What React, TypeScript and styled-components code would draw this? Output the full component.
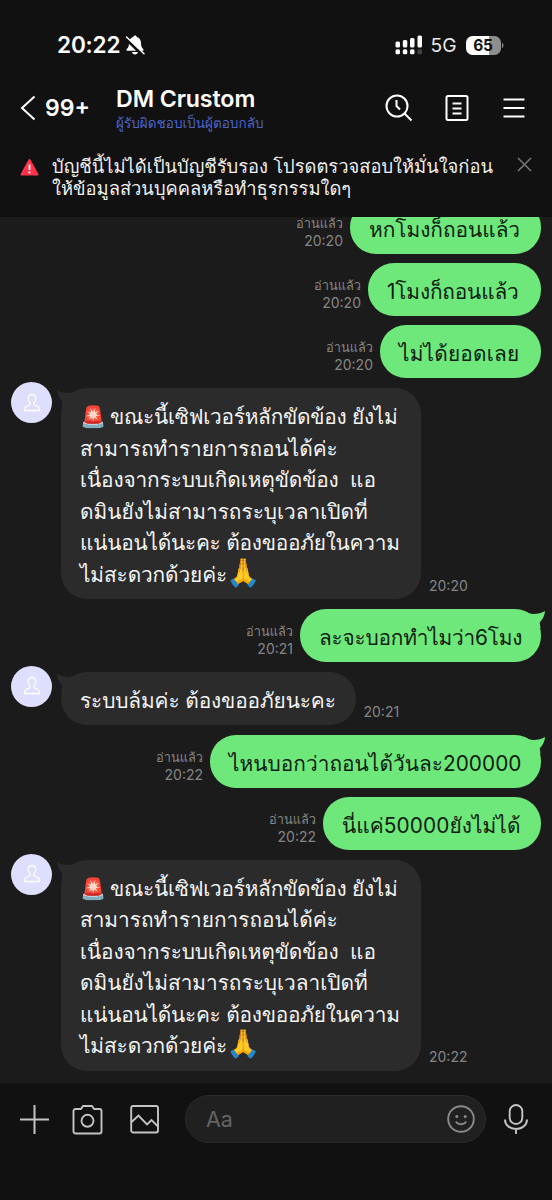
import React from "react";
import styled, { createGlobalStyle } from "styled-components";

const Global = createGlobalStyle`
  * { box-sizing: border-box; }
  html, body { margin: 0; background: #111111; }
  body { font-family: Inter, Loma, "Noto Sans Thai Looped", "Liberation Sans", sans-serif; color: #fff; overflow: hidden; }
`;

const Screen = styled.div`
  width: 552px;
  height: 1200px;
  display: flex;
  flex-direction: column;
  background: #1b1b1b;
  overflow: hidden;
`;

const Top = styled.header`
  height: 217px;
  flex: none;
  background: #111111;
  display: flex;
  flex-direction: column;
`;

const StatusBar = styled.div`
  height: 76px;
  padding: 14px 48.5px 0 57px;
  display: flex;
  align-items: center;
`;

const Clock = styled.span`
  font-size: 22.6px;
  font-weight: 600;
  line-height: 28px;
  letter-spacing: -0.2px;
`;

const BellOff = styled.svg`
  margin-left: 5px;
`;

const Signal = styled.svg`
  margin-left: auto;
`;

const Network = styled.span`
  font-size: 19.2px;
  line-height: 24px;
  color: #e8e8e8;
  margin: 0 9px 0 7.5px;
`;

const Battery = styled.div`
  width: 35px;
  height: 19px;
  border-radius: 6.5px;
  background: linear-gradient(90deg, #fff 0 65%, #8e8e8e 65%);
  color: #111;
  font-size: 15.5px;
  font-weight: 700;
  line-height: 19.5px;
  text-align: center;
  letter-spacing: -0.3px;
`;

const NavBar = styled.div`
  height: 64px;
  display: flex;
  align-items: center;
  padding: 0 27.5px 0 20px;
`;

const Unread = styled.span`
  width: 80px;
  padding-left: 9px;
  font-size: 23px;
  font-weight: 600;
  line-height: 28px;
`;

const TitleBlock = styled.div`
  flex: 1;
  height: 52px;
  padding-top: 3px;
`;

const Title = styled.div`
  font-size: 23.2px;
  font-weight: 600;
  line-height: 28px;
  letter-spacing: -0.1px;
`;

const Subtitle = styled.div`
  font-size: 13.55px;
  line-height: 20px;
  color: #4e64c8;
  white-space: nowrap;
`;

const NavIcons = styled.div`
  display: flex;
  align-items: center;
`;

const NoteIcon = styled.svg`
  margin: 0 34px 0 31.5px;
`;

const Notice = styled.div`
  display: flex;
  padding: 14.5px 20px 0 20px;
`;

const WarningIcon = styled.svg`
  margin-top: 3.5px;
`;

const CloseIcon = styled.svg`
  margin-top: 2.5px;
`;

const NoticeText = styled.div`
  flex: 1;
  min-width: 0;
  padding-left: 13px;
  font-size: 18.33px;
  line-height: 22.7px;
  color: #f2f2f2;
  white-space: nowrap;
`;

const Chat = styled.main`
  flex: 1;
  min-height: 0;
  overflow: hidden;
  display: flex;
  flex-direction: column;
  justify-content: flex-end;
  padding: 0 11px 12.5px;
`;

const Row = styled.div<{ $out?: boolean; $gap: number }>`
  display: flex;
  flex: none;
  justify-content: ${(p) => (p.$out ? "flex-end" : "flex-start")};
  align-items: flex-end;
  margin-top: ${(p) => p.$gap}px;
`;

const Bubble = styled.div<{ $out?: boolean; $w: number }>`
  position: relative;
  width: ${(p) => p.$w}px;
  padding: 13px 0 9px 19px;
  border-radius: 26px;
  background: ${(p) => (p.$out ? "#6fe87b" : "#2b2b2b")};
  color: ${(p) => (p.$out ? "#0c1c0e" : "#f4f4f4")};
`;

const Line = styled.div<{ $ls?: number }>`
  height: 31.5px;
  font-size: 20.8px;
  line-height: 31.5px;
  white-space: pre;
  letter-spacing: ${(p) => p.$ls ?? 0}px;
`;

const Emoji = styled.span<{ $size: number; $shift?: number }>`
  display: inline-block;
  width: 30px;
  margin-left: ${(p) => p.$shift ?? 0}px;
  font-size: ${(p) => p.$size}px;
  line-height: 24px;
  letter-spacing: 0;
`;

const Meta = styled.div<{ $out?: boolean }>`
  font-size: 14px;
  line-height: 16.5px;
  color: #858585;
  white-space: nowrap;
  text-align: ${(p) => (p.$out ? "right" : "left")};
  padding: ${(p) => (p.$out ? "0 7px 5px 0" : "0 0 5px 8px")};
`;

const ReadMark = styled.div`
  font-size: 12.8px;
`;

const Avatar = styled.div`
  align-self: flex-start;
  width: 41px;
  height: 41px;
  margin: -6px 9px 0 0;
  border-radius: 50%;
  background: #dedfff;
  display: flex;
  align-items: center;
  justify-content: center;
`;

const Tail = styled.svg<{ $out?: boolean }>`
  position: absolute;
  top: 0;
  ${(p) => (p.$out ? "right: -4px;" : "left: -4px; transform: scaleX(-1);")}
`;

const Composer = styled.footer`
  height: 117px;
  flex: none;
  background: #111111;
  border-top: 1px solid #161616;
  display: flex;
  align-items: flex-start;
  padding: 11px 20px 0 19px;
`;

const Tools = styled.div`
  display: flex;
  align-items: center;
  height: 48px;
`;

const CameraIcon = styled.svg`
  margin: 0 27px 0 22px;
`;

const Field = styled.div`
  width: 301px;
  height: 48px;
  margin: 0 18px 0 26px;
  border-radius: 24px;
  border: 1px solid #2a2a2a;
  background: #202020;
  display: flex;
  align-items: center;
  justify-content: space-between;
  padding: 0 10px 0 20px;
  font-size: 21.5px;
  color: #646464;
`;

type TextLine = { text: string; ls?: number; siren?: boolean; pray?: boolean };
type Msg = { out?: boolean; w: number; gap: number; time: string; lines: TextLine[]; tail?: boolean };

const outage: TextLine[] = [
  { text: "ขณะนี้เซิฟเวอร์หลักขัดข้อง ยังไม่", ls: -0.24, siren: true },
  { text: "สามารถทำรายการถอนได้ค่ะ" },
  { text: "เนื่องจากระบบเกิดเหตุขัดข้อง  แอ", ls: -0.12 },
  { text: "ดมินยังไม่สามารถระบุเวลาเปิดที่" },
  { text: "แน่นอนได้นะคะ ต้องขออภัยในความ", ls: -0.22 },
  { text: "ไม่สะดวกด้วยค่ะ", ls: -0.1, pray: true },
];

const messages: Msg[] = [
  { out: true, w: 191, gap: 0, time: "20:20", lines: [{ text: "หกโมงก็ถอนแล้ว" }] },
  { out: true, w: 173, gap: 8.5, time: "20:20", lines: [{ text: "1โมงก็ถอนแล้ว", ls: -0.15 }] },
  { out: true, w: 161, gap: 8.5, time: "20:20", lines: [{ text: "ไม่ได้ยอดเลย", ls: 0.2 }] },
  { w: 360, gap: 10, time: "20:20", lines: outage, tail: true },
  { out: true, w: 241, gap: 9.5, time: "20:21", lines: [{ text: "ละจะบอกทำไมว่า6โมง", ls: -0.2 }], tail: true },
  { w: 294.5, gap: 9.5, time: "20:21", lines: [{ text: "ระบบล้มค่ะ ต้องขออภัยนะคะ", ls: -0.1 }], tail: true },
  { out: true, w: 331, gap: 9.5, time: "20:22", lines: [{ text: "ไหนบอกว่าถอนได้วันละ200000", ls: 0.05 }], tail: true },
  { out: true, w: 218, gap: 8.5, time: "20:22", lines: [{ text: "นี่แค่50000ยังไม่ได้", ls: 0.1 }] },
  { w: 360, gap: 9.5, time: "20:22", lines: outage, tail: true },
];

const Person = () => (
  <svg width="18" height="20" viewBox="0 0 18 20" fill="none" stroke="#fff" strokeWidth="1.3" strokeLinejoin="round">
    <path d="M9 1.5C6.6 1.5 5.2 3.2 5.2 5.4c0 1.9.8 3.4 1.8 4.200v1.600c0 .6-.3.8-.8 1-2.600.9-4.700 1.900-4.700 4v1.300h15v-1.300c0-2.100-2.100-3.100-4.700-4-.5-.2-.8-.4-.8-1V9.600c1-.8 1.800-2.300 1.800-4.200C12.800 3.200 11.400 1.500 9 1.500z" />
  </svg>
);

const Message = ({ m }: { m: Msg }) => {
  const meta = (
    <Meta $out={m.out}>
      {m.out && <ReadMark>อ่านแล้ว</ReadMark>}
      <div>{m.time}</div>
    </Meta>
  );
  return (
    <Row $out={m.out} $gap={m.gap}>
      {m.out ? meta : <Avatar><Person /></Avatar>}
      <Bubble $out={m.out} $w={m.w}>
        {m.tail && (
          <Tail $out={m.out} width="24" height="20" viewBox="0 0 24 20" fill={m.out ? "#6fe87b" : "#2b2b2b"}>
            <path d="M3 2C7 4 9 5 12.500 5C16.500 5 21 4 24 2C23.800 6 22 10 18.700 13.500L19.500 19L6 19z" />
          </Tail>
        )}
        {m.lines.map((l, i) => (
          <Line key={i} $ls={l.ls}>
            {l.siren && <Emoji $size={21}>🚨 </Emoji>}
            {l.text}
            {l.pray && <Emoji $size={27.5} $shift={-1}>🙏</Emoji>}
          </Line>
        ))}
      </Bubble>
      {!m.out && meta}
    </Row>
  );
};

export default function App() {
  return (
    <Screen>
      <Global />
      <Top>
        <StatusBar>
          <Clock>20:22</Clock>
          <BellOff width="20" height="20" viewBox="0 0 20 20">
            <path d="M10 .5c1 0 1.600.6 1.700 1.400 2.800.7 4.300 3 4.300 6 0 3.500.8 4.600 2.200 6.100.8.9.3 1.800-.6 1.800H2.400c-.9 0-1.400-.9-.6-1.800C3.200 12.500 4 11.400 4 7.900c0-3 1.500-5.300 4.300-6C8.400 1.100 9 .5 10 .5zM7 17h6c-.3 1.500-1.400 2.500-3 2.500S7.300 18.500 7 17z" fill="#fff" />
            <path d="M0 2.500 18 20" stroke="#111" strokeWidth="3.600" />
            <path d="M1.500 2 19 18.800" stroke="#fff" strokeWidth="1.500" strokeLinecap="round" />
          </BellOff>
          <Signal width="28" height="20" viewBox="0 0 28 20" fill="#fff">
            <rect x="0.500" y="6.500" width="4.500" height="6" rx="1.500" />
            <rect x="7.800" y="5" width="4.500" height="7.500" rx="1.500" />
            <rect x="15" y="3" width="4.500" height="9.500" rx="1.500" />
            <rect x="22.500" y="0.500" width="4.500" height="12" rx="1.500" />
            <rect x="0.500" y="14.200" width="4.500" height="5" rx="1.500" />
            <rect x="7.800" y="14.200" width="4.500" height="5" rx="1.500" />
            <rect x="15" y="14.200" width="4.500" height="5" rx="1.500" />
            <rect x="22.500" y="14.200" width="4.500" height="5" rx="1.500" fill="#444" />
          </Signal>
          <Network>5G</Network>
          <Battery>65</Battery>
          <svg width="3" height="7" viewBox="0 0 3 7"><path d="M1 .8C3 2 3 5 1 6.200z" fill="#8e8e8e" /></svg>
        </StatusBar>
        <NavBar>
          <svg width="16" height="26" viewBox="0 0 16 26" fill="none" stroke="#fff" strokeWidth="2">
            <path d="M14.500 1.500 2 13l12.500 11.500" />
          </svg>
          <Unread>99+</Unread>
          <TitleBlock>
            <Title>DM Crustom</Title>
            <Subtitle>ผู้รับผิดชอบเป็นผู้ตอบกลับ</Subtitle>
          </TitleBlock>
          <NavIcons>
            <svg width="28" height="28" viewBox="0 0 28 28" fill="none" stroke="#fff" strokeWidth="2">
              <circle cx="12" cy="12" r="10.500" />
              <path d="M19.500 19.500 26.500 26.500M11.500 6v6l3.500 3.500" />
            </svg>
            <NoteIcon width="24" height="28" viewBox="0 0 24 28" fill="none" stroke="#fff" strokeWidth="2">
              <rect x="1.500" y="2" width="21" height="24" rx="1.500" />
              <path d="M7.500 9.500h9M7.500 14.500h9M7.500 19.500h9" />
            </NoteIcon>
            <svg width="22" height="22" viewBox="0 0 22 22" stroke="#fff" strokeWidth="2">
              <path d="M.5 2.500h21M.5 11h21M.5 19.500h21" />
            </svg>
          </NavIcons>
        </NavBar>
        <Notice>
          <WarningIcon width="19" height="19" viewBox="0 0 19 19">
            <path d="M9.500 2 17.500 16.500h-16z" fill="#ff334b" stroke="#ff334b" strokeWidth="2" strokeLinejoin="round" />
            <path d="M9.500 6.500v5.500M9.500 13.500v2" stroke="#fff" strokeWidth="1.800" />
          </WarningIcon>
          <NoticeText>
            <div>บัญชีนี้ไม่ได้เป็นบัญชีรับรอง โปรดตรวจสอบให้มั่นใจก่อน</div>
            <div>ให้ข้อมูลส่วนบุคคลหรือทำธุรกรรมใดๆ</div>
          </NoticeText>
          <CloseIcon width="15" height="15" viewBox="0 0 15 15" stroke="#777" strokeWidth="1.500">
            <path d="M1 1l13 13M14 1 1 14" />
          </CloseIcon>
        </Notice>
      </Top>
      <Chat>
        {messages.map((m, i) => <Message key={i} m={m} />)}
      </Chat>
      <Composer>
        <Tools>
          <svg width="31" height="31" viewBox="0 0 31 31" stroke="#c4c4c4" strokeWidth="2">
            <path d="M1 15.500h29M15.500 1v29" />
          </svg>
          <CameraIcon width="31" height="31" viewBox="0 0 31 31" fill="none" stroke="#c4c4c4" strokeWidth="1.900" strokeLinejoin="round">
            <path d="M3.500 5h5.500l2-3h9l2 3h5.500a2 2 0 0 1 2 2v20.500a2 2 0 0 1-2 2h-24a2 2 0 0 1-2-2V7a2 2 0 0 1 2-2z" />
            <circle cx="15.500" cy="16.800" r="6" />
          </CameraIcon>
          <svg width="29" height="31" viewBox="0 0 29 31" fill="none" stroke="#c4c4c4" strokeWidth="1.900">
            <rect x="1.200" y="2" width="26.800" height="26.500" rx="2" />
            <path d="M1 18.500 8.500 11.500 17 20.500 21.500 16 28 22.500" />
          </svg>
        </Tools>
        <Field>
          <span>Aa</span>
          <svg width="28" height="28" viewBox="0 0 28 28" fill="none" stroke="#8a8a8a" strokeWidth="1.900">
            <circle cx="14" cy="14" r="12.800" />
            <path d="M9 16.500c1.500 3.600 8.500 3.600 10 0" />
            <circle cx="9.800" cy="11.500" r="1.500" fill="#8a8a8a" stroke="none" />
            <circle cx="18.200" cy="11.500" r="1.500" fill="#8a8a8a" stroke="none" />
          </svg>
        </Field>
        <Tools>
          <svg width="24" height="32" viewBox="0 0 24 32" fill="none" stroke="#c4c4c4" strokeWidth="1.900">
            <rect x="5.700" y="2" width="12.600" height="19" rx="6.300" />
            <path d="M1 16.500c0 5.500 4.500 9.500 11 9.500s11-4 11-9.500M12 26v5" />
          </svg>
        </Tools>
      </Composer>
    </Screen>
  );
}
